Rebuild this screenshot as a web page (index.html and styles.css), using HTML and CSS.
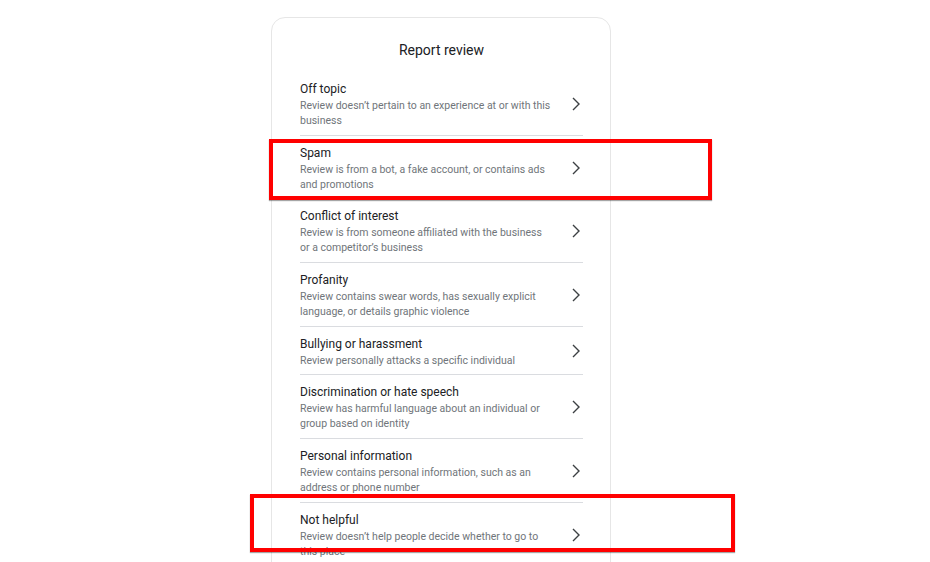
FILE: index.html
```html
<!DOCTYPE html>
<html>
<head>
<meta charset="utf-8">
<link rel="stylesheet" href="styles.css">
</head>
<body>
<div class="page">
  <div class="card">
    <h1 class="title">Report review</h1>
    <ul class="list">
      <li class="item">
        <div class="text"><div class="name">Off topic</div><div class="desc">Review doesn’t pertain to an experience at or with this business</div></div>
        <svg class="chev" width="12" height="14" viewBox="0 0 12 14"><polyline points="3,1 9,7 3,13" fill="none" stroke="#3c4043" stroke-width="1.4"/></svg>
      </li>
      <li class="item">
        <div class="text"><div class="name">Spam</div><div class="desc">Review is from a bot, a fake account, or contains ads and promotions</div></div>
        <svg class="chev" width="12" height="14" viewBox="0 0 12 14"><polyline points="3,1 9,7 3,13" fill="none" stroke="#3c4043" stroke-width="1.4"/></svg>
      </li>
      <li class="item">
        <div class="text"><div class="name">Conflict of interest</div><div class="desc">Review is from someone affiliated with the business or a competitor’s business</div></div>
        <svg class="chev" width="12" height="14" viewBox="0 0 12 14"><polyline points="3,1 9,7 3,13" fill="none" stroke="#3c4043" stroke-width="1.4"/></svg>
      </li>
      <li class="item">
        <div class="text"><div class="name">Profanity</div><div class="desc">Review contains swear words, has sexually explicit language, or details graphic violence</div></div>
        <svg class="chev" width="12" height="14" viewBox="0 0 12 14"><polyline points="3,1 9,7 3,13" fill="none" stroke="#3c4043" stroke-width="1.4"/></svg>
      </li>
      <li class="item">
        <div class="text"><div class="name">Bullying or harassment</div><div class="desc">Review personally attacks a specific individual</div></div>
        <svg class="chev" width="12" height="14" viewBox="0 0 12 14"><polyline points="3,1 9,7 3,13" fill="none" stroke="#3c4043" stroke-width="1.4"/></svg>
      </li>
      <li class="item">
        <div class="text"><div class="name">Discrimination or hate speech</div><div class="desc">Review has harmful language about an individual or group based on identity</div></div>
        <svg class="chev" width="12" height="14" viewBox="0 0 12 14"><polyline points="3,1 9,7 3,13" fill="none" stroke="#3c4043" stroke-width="1.4"/></svg>
      </li>
      <li class="item">
        <div class="text"><div class="name">Personal information</div><div class="desc">Review contains personal information, such as an address or phone number</div></div>
        <svg class="chev" width="12" height="14" viewBox="0 0 12 14"><polyline points="3,1 9,7 3,13" fill="none" stroke="#3c4043" stroke-width="1.4"/></svg>
      </li>
      <li class="item">
        <div class="text"><div class="name">Not helpful</div><div class="desc">Review doesn’t help people decide whether to go to this place</div></div>
        <svg class="chev" width="12" height="14" viewBox="0 0 12 14"><polyline points="3,1 9,7 3,13" fill="none" stroke="#3c4043" stroke-width="1.4"/></svg>
      </li>
    </ul>
  </div>
  <div class="mark mark-spam"></div>
  <div class="mark mark-helpful"></div>
</div>
</body>
</html>
```

FILE: styles.css
```css
html, body {
  margin: 0;
  padding: 0;
  background: #fff;
  height: 562px;
  overflow: hidden;
}
.page {
  position: relative;
  padding: 17px 0 0 271px;
  font-family: Roboto, "Noto Sans", sans-serif;
  color: #202124;
}
.card {
  width: 283px;
  height: 700px;
  border: 1px solid #e6e6e6;
  border-radius: 14px;
  box-sizing: content-box;
  padding: 0 27px 0 28px;
}
.title {
  margin: 22px 0 12px;
  font-size: 14px;
  line-height: 20px;
  font-weight: 400;
  text-align: center;
}
.list {
  list-style: none;
  margin: 0;
  padding: 0;
}
.item {
  display: flex;
  align-items: center;
  padding: 8px 0 6.7px;
  border-bottom: 1px solid #dadce0;
}
.text {
  flex: 1;
  padding-right: 18px;
}
.name {
  font-size: 12px;
  line-height: 18px;
  color: #202124;
}
.desc {
  font-size: 10.5px;
  line-height: 15px;
  color: #70757a;
}
.chev {
  flex: none;
  margin-right: 1px;
}
.mark {
  position: absolute;
  border: 4px solid #ff0000;
  box-shadow: 0 1px 1px rgba(0,0,0,0.35);
}
.mark-spam {
  left: 269px;
  top: 139px;
  width: 435px;
  height: 53px;
}
.mark-helpful {
  left: 250px;
  top: 494px;
  width: 477px;
  height: 50px;
}
```
